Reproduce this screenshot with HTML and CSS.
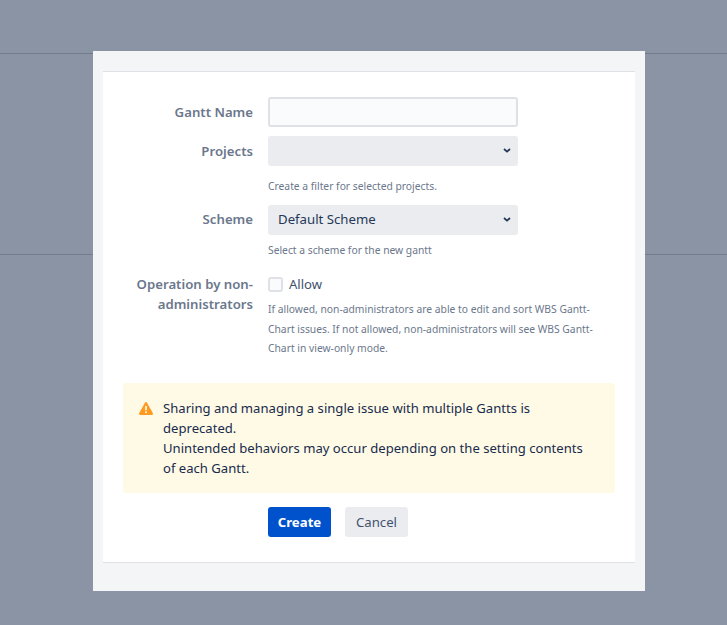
FILE: index.html
```html
<!DOCTYPE html>
<html lang="en">
<head>
<meta charset="utf-8">
<title>Create Gantt</title>
<link rel="stylesheet" href="styles.css">
</head>
<body>
<div class="page">
  <div class="band band-top"></div>
  <div class="band band-mid"></div>
</div>
<div class="modal">
  <div class="panel">
    <form class="form">
      <div class="row row-name">
        <label class="label" for="name">Gantt Name</label>
        <div class="field"><input class="input" id="name" type="text"></div>
      </div>
      <div class="row row-projects">
        <label class="label" for="projects">Projects</label>
        <div class="field">
          <select class="select select-empty" id="projects"><option></option></select>
          <p class="help help-first">Create a filter for selected projects.</p>
        </div>
      </div>
      <div class="row row-scheme">
        <label class="label label-scheme" for="scheme">Scheme</label>
        <div class="field">
          <select class="select" id="scheme"><option>Default Scheme</option></select>
          <p class="help help-second">Select a scheme for the new gantt</p>
        </div>
      </div>
      <div class="row row-op">
        <label class="label" for="allow">Operation by non-administrators</label>
        <div class="field">
          <label class="check"><input class="box" id="allow" type="checkbox"><span>Allow</span></label>
          <p class="help help-long">If allowed, non-administrators are able to edit and sort WBS Gantt-Chart issues. If not allowed, non-administrators will see WBS Gantt-Chart in view-only mode.</p>
        </div>
      </div>
      <div class="alert">
        <svg class="alert-icon" width="14" height="13" viewBox="0.8 1.2 14.4 13.6" aria-hidden="true"><path fill="#ff991f" d="M6.900 1.900c.5-.9 1.700-.9 2.200 0l6 10.900c.5.900-.1 1.900-1.100 1.900H2c-1 0-1.600-1-1.100-1.900z"/><rect x="7.100" y="5" width="1.800" height="5" rx=".8" fill="#fffae6"/><circle cx="8" cy="11.900" r="1.050" fill="#fffae6"/></svg>
        <div class="alert-text">Sharing and managing a single issue with multiple Gantts is deprecated.<br>Unintended behaviors may occur depending on the setting contents of each Gantt.</div>
      </div>
      <div class="actions">
        <button class="btn btn-primary" type="button">Create</button>
        <button class="btn btn-default" type="button">Cancel</button>
      </div>
    </form>
  </div>
</div>
</body>
</html>
```
FILE: styles.css
```css
* { box-sizing: border-box; }
html, body { margin: 0; height: 100%; }
body {
  background: #8b94a5;
  font-family: "Noto Sans", "Open Sans", sans-serif;
  color: #172b4d;
  font-size: 13.100px;
  overflow: hidden;
}
.band { border-bottom: 1px solid #747b8c; }
.band-top { height: 54px; }
.band-mid { height: 201px; }
.modal {
  position: absolute;
  left: 93px;
  top: 51px;
  width: 552px;
  height: 540px;
  background: #f4f5f7;
  padding: 20px 10px 28px;
}
.panel {
  height: 100%;
  background: #fff;
  border-top: 1px solid #dfe1e6;
  border-bottom: 1px solid #dfe1e6;
}
.form { padding: 25px 20px 0; }
.row { display: flex; }
.row-projects { margin-top: 9px; }
.row-scheme { margin-top: 8.500px; }
.row-op { margin-top: 9px; }
.label {
  width: 130px;
  margin-right: 15px;
  text-align: right;
  font-weight: 600;
  color: #6b778c;
  line-height: 20px;
  font-size: 13.200px;
  padding-top: 5px;
}
.label-scheme { padding-top: 4px; }
.field { flex: 1; }
.input {
  display: block;
  width: 250px;
  height: 30px;
  background: #fafbfc;
  border: 2px solid #dfe1e6;
  border-radius: 3px;
  outline: none;
}
.select {
  display: block;
  appearance: none;
  width: 250px;
  height: 30px;
  background-color: #ebecf0;
  background-image: url("data:image/svg+xml,%3Csvg xmlns='http://www.w3.org/2000/svg' width='8' height='5' viewBox='0 0 8 5'%3E%3Cpath d='M1 1l3 2.600L7 1' fill='none' stroke='%23253858' stroke-width='1.800'/%3E%3C/svg%3E");
  background-repeat: no-repeat;
  background-position: right 7px center;
  border: 0;
  border-radius: 3px;
  padding: 0 0 2px 10px;
  color: #253858;
  font: 13.200px "Noto Sans", "Open Sans", sans-serif;
}
.select-empty { background-position: right 7px top 12px; }
.help {
  margin: 0;
  font-size: 10.300px;
  line-height: 20px;
  color: #6b778c;
}
.help-first { margin-top: 10px; }
.help-second { margin-top: 5.500px; }
.help-long { margin-top: 6px; line-height: 19.500px; }
.check {
  display: flex;
  align-items: center;
  height: 20px;
  margin-top: 5px;
  color: #42526e;
}
.box {
  appearance: none;
  width: 15px;
  height: 15px;
  margin: 0 6px 0 0;
  background: #fafbfc;
  border: 2px solid #dfe1e6;
  border-radius: 3px;
}
.alert {
  display: flex;
  margin-top: 24px;
  height: 110px;
  padding: 15px 24px 15px 16px;
  background: #fffae6;
  border-radius: 3px;
  gap: 10px;
  line-height: 20px;
}
.alert-icon { flex: none; margin-top: 4px; }
.actions { display: flex; gap: 14px; margin: 14px 0 0 145px; }
.btn {
  width: 63px;
  height: 30px;
  border: 0;
  border-radius: 3px;
  padding: 0;
  font: 13.200px "Noto Sans", "Open Sans", sans-serif;
}
.btn-primary { background: #0052cc; color: #fff; font-weight: 700; }
.btn-default { background: #ebecf0; color: #42526e; }
```
